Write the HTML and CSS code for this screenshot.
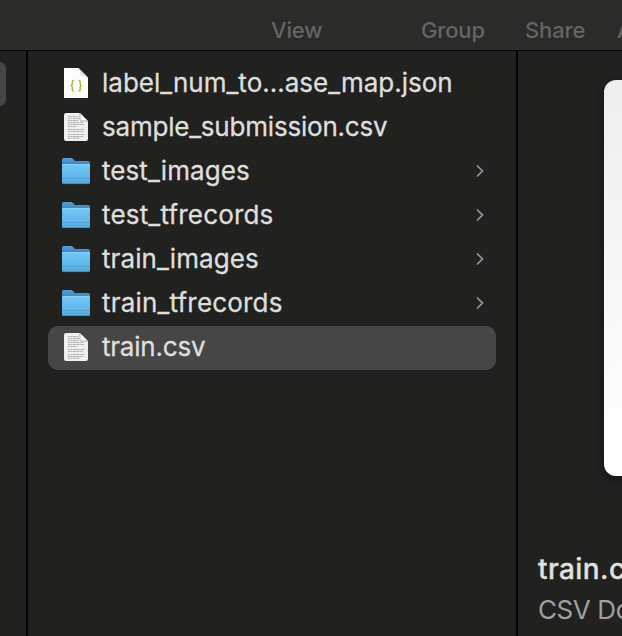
FILE: index.html
```
<!DOCTYPE html>
<html lang="en">
<head>
<meta charset="utf-8">
<title>Finder</title>
<link rel="stylesheet" href="styles.css">
</head>
<body>
<svg width="0" height="0" class="defs" aria-hidden="true">
  <defs>
    <linearGradient id="front" x1="0" y1="0" x2="0" y2="1"><stop offset="0" stop-color="#73c8f8"/><stop offset="1" stop-color="#57ade3"/></linearGradient>
    <linearGradient id="back" x1="0" y1="0" x2="0" y2="1"><stop offset="0" stop-color="#559fd5"/><stop offset=".3" stop-color="#3983be"/></linearGradient>
    <linearGradient id="fold" x1="0" y1="1" x2="1" y2="0"><stop offset="0" stop-color="#fff"/><stop offset=".5" stop-color="#d8d8d8"/><stop offset="1" stop-color="#999"/></linearGradient>
    <symbol id="folder" viewBox="0 0 28 28">
      <path d="M0 3Q0 1 2 1H9Q10 1 11 2L13 4H26Q28 4 28 6V25Q28 27 26 27H2Q0 27 0 25Z" fill="url(#back)"/>
      <path d="M0 8Q0 7 1 7H27Q28 7 28 8V25Q28 27 26 27H2Q0 27 0 25Z" fill="url(#front)"/>
      <path d="M.5 7.5H27.5" stroke="#82d0fb" stroke-width="1"/>
      <path d="M0 21.5H28M0 24.5H28" stroke="#4c9fd6" stroke-width=".6"/>
      <path d="M1 26.6H27" stroke="#3b87bb" stroke-width=".8"/>
    </symbol>
    <symbol id="json" viewBox="0 0 24 30">
      <path d="M0 0H14.5L24 9.5V30H0Z" fill="#fdfdfd"/>
      <path d="M14.5 0C17 3 16.5 5.500 16 8C19 7.500 22 8 24 9.500Z" fill="url(#fold)"/>
      <path d="M10 12.500H9.500Q8.300 12.500 8.300 14V16Q8.300 17.500 6.800 17.500Q8.300 17.500 8.300 19V21.500Q8.300 23 9.500 23H10M14.500 12.500H15Q16.200 12.500 16.200 14V16Q16.200 17.500 17.700 17.500Q16.200 17.500 16.200 19V21.500Q16.200 23 15 23H14.500" fill="none" stroke="#b4b63f" stroke-width="1.500"/>
    </symbol>
    <symbol id="doc" viewBox="0 0 24 28">
      <path d="M2 0H16L24 8V26Q24 28 22 28H2Q0 28 0 26V2Q0 0 2 0Z" fill="#efefef"/>
      <g fill="none" stroke="#999" stroke-width="1" stroke-dasharray="2.500 .5 1.500 .4 3 .5">
        <path d="M4 3.500H14M4 5.500H15M4 7.500H14M4 9.500H19M4 11.500H20M4 13.500H13M4 16.500H20M4 18.500H19M4 21.500H20M4 23.500H19M4 25.200H16" opacity=".72"/>
      </g>
      <path d="M16 0V6.500Q16 8 17.500 8H24Z" fill="#fafafa" stroke="#8a8a8a" stroke-width=".7"/>
    </symbol>
    <symbol id="chevron" viewBox="0 0 8 14"><path d="M1 1.500L6.500 7L1 12.500" fill="none" stroke="#999998" stroke-width="1.700"/></symbol>
  </defs>
</svg>
<div class="window">
  <header class="toolbar">
    <span class="view">View</span><span class="group">Group</span><span class="share">Share</span><span>Add Tags</span>
  </header>
  <div class="browser">
    <div class="parent"><div class="parent-selection"></div></div>
    <ul class="files">
      <li><svg class="icon json"><use href="#json"/></svg><span class="json-name">label_num_to...ase_map.json</span></li>
      <li><svg class="icon doc"><use href="#doc"/></svg><span class="csv-name">sample_submission.csv</span></li>
      <li><svg class="icon folder"><use href="#folder"/></svg><span>test_images</span><svg class="chevron"><use href="#chevron"/></svg></li>
      <li><svg class="icon folder"><use href="#folder"/></svg><span class="records-name">test_tfrecords</span><svg class="chevron"><use href="#chevron"/></svg></li>
      <li><svg class="icon folder"><use href="#folder"/></svg><span>train_images</span><svg class="chevron"><use href="#chevron"/></svg></li>
      <li><svg class="icon folder"><use href="#folder"/></svg><span class="records-name">train_tfrecords</span><svg class="chevron"><use href="#chevron"/></svg></li>
      <li class="selected"><svg class="icon doc"><use href="#doc"/></svg><span class="csv-name">train.csv</span></li>
    </ul>
    <section class="preview">
      <div class="page"></div>
      <h1>train.csv</h1>
      <p>CSV Document</p>
    </section>
  </div>
</div>
</body>
</html>
```

FILE: styles.css
```
* { box-sizing: border-box; }
body { margin: 0; background: #212120; font-family: Inter, "Liberation Sans", sans-serif; overflow: hidden; }
.defs { display: block; height: 0; }
.window { width: 622px; height: 636px; display: flex; flex-direction: column; overflow: hidden; }
.toolbar { flex: none; height: 51px; background: #2b2b2a; border-bottom: 1px solid #000; color: #656564; display: flex; padding: 16px 0 0 271px; font-size: 22px; line-height: 28px; font-weight: 500; letter-spacing: -.15px; white-space: nowrap; }
.toolbar span { flex: none; }
.view { width: 150px; }
.group { width: 104px; }
.share { width: 92px; }
.browser { flex: 1; display: grid; grid-template-columns: 28px 490px 104px; min-height: 0; }
.parent { border-right: 2px solid #000; padding-top: 11px; }
.parent-selection { width: 6px; height: 44px; background: #464646; border-radius: 0 9px 9px 0; }
.files { margin: 0; padding: 11px 20px 0; list-style: none; border-right: 2px solid #000; color: #dededd; }
.files li { height: 44px; display: flex; align-items: center; border-radius: 10px; padding: 0 12px 0 14px; font-size: 26px; line-height: 32px; white-space: nowrap; -webkit-text-stroke: .3px currentColor; }
.files .selected { background: #464646; }
.files span { padding-bottom: 2px; letter-spacing: .08px; }
.files .json-name { letter-spacing: 0; }
.files .csv-name { letter-spacing: -.21px; }
.files .records-name { letter-spacing: .18px; }
.icon { flex: none; width: 28px; height: 28px; margin: 0 12px 2px 0; }
.icon.doc { width: 24px; margin: 0 14px 2px 2px; }
.icon.json { width: 24px; height: 30px; margin: 0 14px 3px 2px; }
.chevron { width: 8px; height: 14px; margin: 0 0 2px auto; }
.preview { padding: 29px 0 0 20px; overflow: hidden; white-space: nowrap; }
.page { width: 300px; height: 396px; margin-left: 66px; border-radius: 12px; background: linear-gradient(165deg, #eee 0, #fff 80%); box-shadow: 0 3px 8px rgba(0,0,0,.45); }
.preview h1 { margin: 76px 0 0; color: #e0e0df; font-size: 28px; line-height: 34px; font-weight: 500; letter-spacing: .4px; -webkit-text-stroke: .3px currentColor; }
.preview p { margin: 8px 0 0; color: #a0a09f; font-size: 26px; line-height: 32px; letter-spacing: -.4px; }
```
